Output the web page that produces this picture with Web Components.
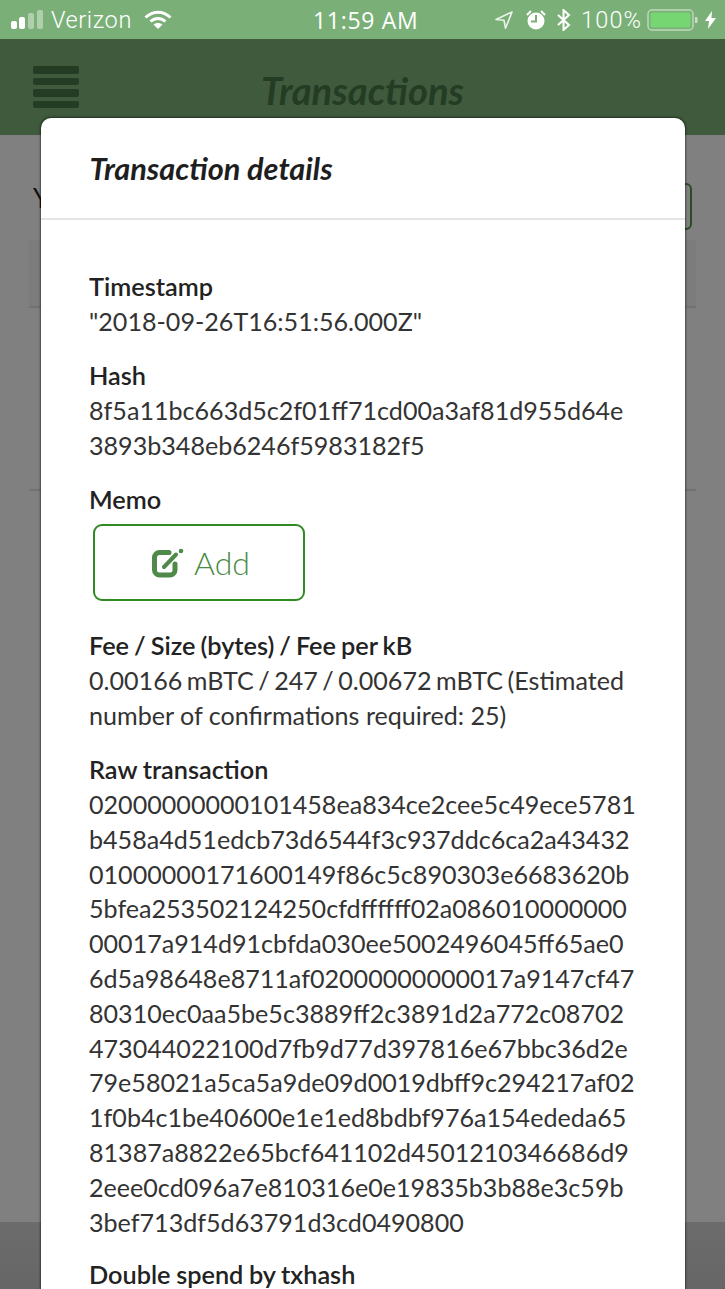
<!DOCTYPE html>
<html><head><meta charset="utf-8"><style>
html,body{margin:0;padding:0;height:1289px;overflow:hidden;background:#808080}
body{position:relative;width:725px;font-family:Lato,"Liberation Sans",sans-serif}
</style></head><body>
<status-bar></status-bar>
<app-header>Transactions</app-header>
<back-page></back-page>
<detail-modal>
<span slot="title">Transaction details</span>
<detail-row label="Timestamp">"2018-09-26T16:51:56.000Z"</detail-row>
<detail-row label="Hash">8f5a11bc663d5c2f01ff71cd00a3af81d955d64e<br>3893b348eb6246f5983182f5</detail-row>
<detail-row label="Memo"><add-button>Add</add-button></detail-row>
<detail-row label="Fee / Size (bytes) / Fee per kB" style="--ws:-1.3px"><span style="word-spacing:-1.9px">0.00166 mBTC / 247 / 0.00672 mBTC (Estimated</span><br>number of confirmations required: 25)</detail-row>
<detail-row label="Raw transaction" style="--blh:34.800px">02000000000101458ea834ce2cee5c49ece5781<br>b458a4d51edcb73d6544f3c937ddc6ca2a43432<br>01000000171600149f86c5c890303e6683620b<br>5bfea253502124250cfdffffff02a086010000000<br>00017a914d91cbfda030ee5002496045ff65ae0<br>6d5a98648e8711af02000000000017a9147cf47<br>80310ec0aa5be5c3889ff2c3891d2a772c08702<br>473044022100d7fb9d77d397816e67bbc36d2e<br>79e58021a5ca5a9de09d0019dbff9c294217af02<br>1f0b4c1be40600e1e1ed8bdbf976a154ededa65<br>81387a8822e65bcf641102d4501210346686d9<br>2eee0cd096a7e810316e0e19835b3b88e3c59b<br>3bef713df5d63791d3cd0490800</detail-row>
<detail-row label="Double spend by txhash" style="--lh:26px;margin-top:3px"></detail-row>
</detail-modal>
<script>
function def(name,html){customElements.define(name,class extends HTMLElement{constructor(){super();this.attachShadow({mode:'open'}).innerHTML=typeof html==='function'?html(this):html;}})}
def('status-bar',`<style>
:host{display:flex;align-items:center;height:39px;background:#7ab077;color:#fff;font:23.5px Roboto,sans-serif;padding:0 9px 0 11px;box-sizing:border-box;justify-content:space-between;position:relative}
.l,.r{display:flex;align-items:center}
.time{position:absolute;left:313px;top:6px;line-height:28px;font-weight:500;font-size:23px;letter-spacing:.7px;font-family:"Open Sans",Roboto,sans-serif}
.carrier{margin:0 12px 0 6px;font-weight:300;letter-spacing:.6px}
.pct{font-weight:300;letter-spacing:1.1px;margin:0 5px 0 10px}
svg{display:block}
</style>
<div class="l"><svg width="34" height="20" viewBox="0 0 34 20"><rect x="0" y="11" width="6" height="8" rx="2" fill="#fff"/><rect x="8" y="7" width="6" height="12" rx="2" fill="#fff"/><rect x="17" y="3" width="6" height="16" rx="2" fill="#fff" fill-opacity=".4"/><rect x="26" y="0" width="6" height="19" rx="2" fill="#fff" fill-opacity=".4"/></svg>
<span class="carrier">Verizon</span>
<svg width="28" height="20" viewBox="0 0 28 20" fill="none" stroke="#fff" stroke-width="3"><path d="M1.500 7.500C9 .5 19 .5 26.500 7.500"/><path d="M6.500 11.500c4.500-4 10.500-4 15 0"/><path d="M14 19l-4.500-4.500c2.500-2 6.500-2 9 0z" fill="#fff" stroke="none"/></svg></div>
<div class="time">11:59 AM</div>
<div class="r"><svg width="20" height="20" viewBox="0 0 20 20" fill="none" stroke="#fff" stroke-opacity=".85" stroke-width="1.600"><path d="M18 2L2 9.500l8 .8 1.500 8z" stroke-linejoin="round"/></svg>
<svg style="margin-left:12px" width="20" height="22" viewBox="0 0 20 22"><circle cx="10" cy="12" r="8.500" fill="#fff"/><path d="M10 6v6.500H5" fill="none" stroke="#7ab077" stroke-width="2"/><path d="M1 6l4-4M19 6l-4-4" stroke="#fff" stroke-width="2"/></svg>
<svg style="margin-left:10px" width="15" height="22" viewBox="0 0 15 22" fill="none" stroke="#fff" stroke-width="2"><path d="M2 6l11 10-5.500 5V1L13 6 2 16"/></svg>
<span class="pct">100%</span>
<svg width="52" height="22" viewBox="0 0 52 22"><rect x="1" y="1" width="45" height="20" rx="4" fill="none" stroke="#fff" stroke-opacity=".5" stroke-width="1.500"/><rect x="3.500" y="3.500" width="40" height="15" rx="2" fill="#76d672"/><path d="M48 8h1.500a1 1 0 0 1 1 1v4a1 1 0 0 1-1 1H48z" fill="#fff" fill-opacity=".6"/></svg>
<svg style="margin-left:6px" width="11" height="18" viewBox="0 0 11 18"><path d="M7 0L0 10h4l-1 8 8-11H6.500z" fill="#fff"/></svg></div>`);
def('app-header',`<style>
:host{display:block;height:96px;background:#3f5a3c;position:relative;box-sizing:border-box}
.t{position:absolute;top:28px;left:0;right:0;text-align:center;font:italic 700 38.200px/46px Lato,sans-serif;color:#253c24}
.m{position:absolute;left:33px;top:27px;width:46px;height:42px;display:flex;flex-direction:column;justify-content:space-between}
.m i{display:block;height:7.500px;border-radius:2px;background:#253c24}
</style><div class="m"><i></i><i></i><i></i><i></i></div><div class="t"><slot></slot></div>`);
def('back-page',`<style>
:host{display:block;position:absolute;left:0;right:0;top:135px;height:1154px;background:#808080;color:#111;font:26px/1 Lato,sans-serif}
.y{position:absolute;left:33px;top:50px}
.b{position:absolute;right:33px;top:48px;width:60px;height:47px;border:2px solid #26501f;border-radius:6px;box-sizing:border-box}
.tb{position:absolute;left:29px;right:29px;top:105px;height:68px;background:#7c7c7c;border-bottom:2px solid #727272;box-sizing:border-box}
.l3{position:absolute;left:29px;right:29px;top:354px;height:2px;background:#727272}
.f{position:absolute;left:0;right:0;bottom:0;height:67px;background:linear-gradient(#6c6c6c,#666)}
</style><div class="y">Y</div><div class="b"></div><div class="tb"></div><div class="l3"></div><div class="f"></div>`);
def('detail-modal',`<style>
:host{display:block;position:absolute;left:41px;top:118px;width:644px;height:1171px;background:#fff;border-radius:10px 10px 0 0;box-shadow:0 0 2px 1px rgba(0,0,0,.45);color:#222}
.h{height:102px;box-sizing:border-box;border-bottom:2px solid #e4e4e4;padding:33px 48px 0 48.500px;font:italic 700 30.700px/36px Lato,sans-serif;color:#1e1e1e}
.c{padding:49px 48px 0;display:flex;flex-direction:column;gap:19px;height:1069px;box-sizing:border-box;overflow:hidden}
</style><div class="h"><slot name="title"></slot></div><div class="c"><slot></slot></div>`);
def('detail-row',(el)=>`<style>
:host{display:block;font:400 25.100px/34.900px Lato,sans-serif;color:#333;white-space:nowrap}
.k{font-weight:600;color:#222;font-size:25.300px;word-spacing:var(--ws,-.7px);line-height:var(--lh,34.900px)}
.v{line-height:var(--blh,34.900px)}
</style><div class="k">${el.getAttribute('label')}</div><div class="v"><slot></slot></div>`);
def('add-button',`<style>
:host{display:flex;align-items:center;justify-content:center;gap:10px;width:212px;height:77px;margin:8px 0 8px 4px;padding:0 0 0 4px;box-sizing:border-box;border:2px solid #2f8a22;border-radius:9px;color:#4a8a44;font:300 32px/1 Lato,sans-serif}
svg{display:block}
</style><svg width="32" height="30" viewBox="0 0 32 30" fill="none"><path d="M17 4.500H7.500a5 5 0 0 0-5 5V22a5 5 0 0 0 5 5H18a5 5 0 0 0 5-5v-6" stroke="#4f8a48" stroke-width="5" stroke-linecap="round"/><path d="M12 19L24 6.500" stroke="#4f8a48" stroke-width="4" stroke-linecap="round"/><circle cx="29" cy="3" r="2.300" fill="#4f8a48"/></svg><span><slot></slot></span>`);
</script>
</body></html>
